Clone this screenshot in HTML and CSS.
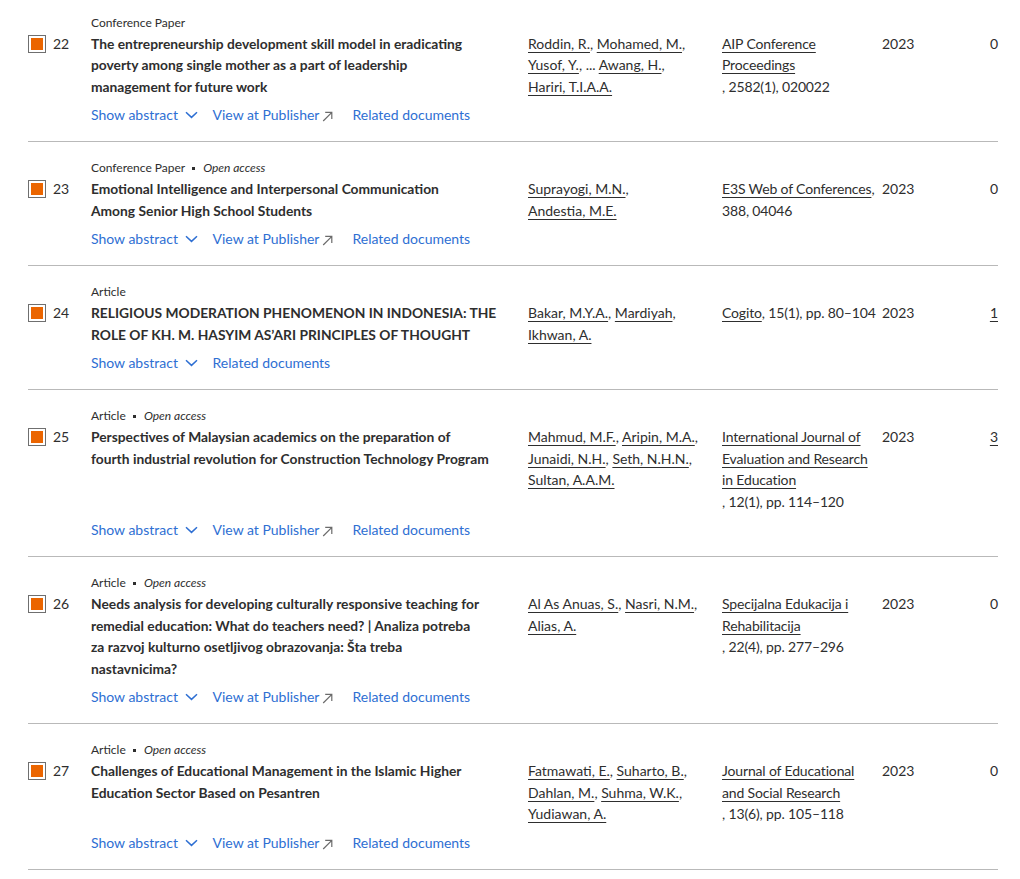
FILE: index.html
```html
<!DOCTYPE html>
<html>
<head>
  <meta charset="UTF-8" />
  <title>Documents</title>
  <link rel="stylesheet" href="styles.css">
</head>
<body>
  <div class="doc-list">

    <div class="doc">
      <div class="doc-type">Conference Paper</div>
      <span class="check"><span class="check-fill"></span></span>
      <span class="doc-num">22</span>
      <h3 class="doc-title">The entrepreneurship development skill model in eradicating<br>poverty among single mother as a part of leadership<br>management for future work</h3>
      <div class="doc-authors"><a href="#">Roddin, R.</a>, <a href="#">Mohamed, M.</a>, <a href="#">Yusof, Y.</a>, ... <a href="#">Awang, H.</a>, <a href="#">Hariri, T.I.A.A.</a></div>
      <div class="doc-source"><a href="#">AIP Conference Proceedings</a>&#8203;, <span class="vol">2582(1), 020022</span></div>
      <div class="doc-year">2023</div>
      <div class="doc-cites">0</div>
      <div class="doc-links">
        <a href="#" class="lnk">Show abstract <svg class="chev" width="13" height="8" viewBox="0 0 13 8"><path d="M1 1.2 L6.5 6.4 L12 1.2" /></svg></a>
        <a href="#" class="lnk">View at Publisher<svg class="ext" width="11" height="11" viewBox="0 0 11 11"><path d="M1.2 10 L9.6 1.6 M3.2 1.4 H9.8 V8" /></svg></a>
        <a href="#" class="lnk">Related documents</a>
      </div>
    </div>

    <div class="doc">
      <div class="doc-type">Conference Paper <span class="dot"></span> <em>Open access</em></div>
      <span class="check"><span class="check-fill"></span></span>
      <span class="doc-num">23</span>
      <h3 class="doc-title">Emotional Intelligence and Interpersonal Communication<br>Among Senior High School Students</h3>
      <div class="doc-authors"><a href="#">Suprayogi, M.N.</a>, <a href="#">Andestia, M.E.</a></div>
      <div class="doc-source"><a href="#">E3S Web of Conferences</a>&#8203;, <span class="vol">388, 04046</span></div>
      <div class="doc-year">2023</div>
      <div class="doc-cites">0</div>
      <div class="doc-links">
        <a href="#" class="lnk">Show abstract <svg class="chev" width="13" height="8" viewBox="0 0 13 8"><path d="M1 1.2 L6.5 6.4 L12 1.2" /></svg></a>
        <a href="#" class="lnk">View at Publisher<svg class="ext" width="11" height="11" viewBox="0 0 11 11"><path d="M1.2 10 L9.6 1.6 M3.2 1.4 H9.8 V8" /></svg></a>
        <a href="#" class="lnk">Related documents</a>
      </div>
    </div>

    <div class="doc">
      <div class="doc-type">Article</div>
      <span class="check"><span class="check-fill"></span></span>
      <span class="doc-num">24</span>
      <h3 class="doc-title">RELIGIOUS MODERATION PHENOMENON IN INDONESIA: THE<br>ROLE OF KH. M. HASYIM AS’ARI PRINCIPLES OF THOUGHT</h3>
      <div class="doc-authors"><a href="#">Bakar, M.Y.A.</a>, <a href="#">Mardiyah</a>, <a href="#">Ikhwan, A.</a></div>
      <div class="doc-source"><a href="#">Cogito</a>&#8203;, <span class="vol">15(1), pp. 80–104</span></div>
      <div class="doc-year">2023</div>
      <div class="doc-cites"><a href="#">1</a></div>
      <div class="doc-links">
        <a href="#" class="lnk">Show abstract <svg class="chev" width="13" height="8" viewBox="0 0 13 8"><path d="M1 1.2 L6.5 6.4 L12 1.2" /></svg></a>
        <a href="#" class="lnk">Related documents</a>
      </div>
    </div>

    <div class="doc">
      <div class="doc-type">Article <span class="dot"></span> <em>Open access</em></div>
      <span class="check"><span class="check-fill"></span></span>
      <span class="doc-num">25</span>
      <h3 class="doc-title">Perspectives of Malaysian academics on the preparation of<br>fourth industrial revolution for Construction Technology Program</h3>
      <div class="doc-authors"><a href="#">Mahmud, M.F.</a>, <a href="#">Aripin, M.A.</a>, <a href="#">Junaidi, N.H.</a>, <a href="#">Seth, N.H.N.</a>, <a href="#">Sultan, A.A.M.</a></div>
      <div class="doc-source"><a href="#">International Journal of Evaluation and Research in Education</a>&#8203;, <span class="vol">12(1), pp. 114–120</span></div>
      <div class="doc-year">2023</div>
      <div class="doc-cites"><a href="#">3</a></div>
      <div class="doc-links">
        <a href="#" class="lnk">Show abstract <svg class="chev" width="13" height="8" viewBox="0 0 13 8"><path d="M1 1.2 L6.5 6.4 L12 1.2" /></svg></a>
        <a href="#" class="lnk">View at Publisher<svg class="ext" width="11" height="11" viewBox="0 0 11 11"><path d="M1.2 10 L9.6 1.6 M3.2 1.4 H9.8 V8" /></svg></a>
        <a href="#" class="lnk">Related documents</a>
      </div>
    </div>

    <div class="doc">
      <div class="doc-type">Article <span class="dot"></span> <em>Open access</em></div>
      <span class="check"><span class="check-fill"></span></span>
      <span class="doc-num">26</span>
      <h3 class="doc-title">Needs analysis for developing culturally responsive teaching for<br>remedial education: What do teachers need? | Analiza potreba<br>za razvoj kulturno osetljivog obrazovanja: Šta treba<br>nastavnicima?</h3>
      <div class="doc-authors"><a href="#">Al As Anuas, S.</a>, <a href="#">Nasri, N.M.</a>, <a href="#">Alias, A.</a></div>
      <div class="doc-source"><a href="#">Specijalna Edukacija i Rehabilitacija</a>&#8203;, <span class="vol">22(4), pp. 277–296</span></div>
      <div class="doc-year">2023</div>
      <div class="doc-cites">0</div>
      <div class="doc-links">
        <a href="#" class="lnk">Show abstract <svg class="chev" width="13" height="8" viewBox="0 0 13 8"><path d="M1 1.2 L6.5 6.4 L12 1.2" /></svg></a>
        <a href="#" class="lnk">View at Publisher<svg class="ext" width="11" height="11" viewBox="0 0 11 11"><path d="M1.2 10 L9.6 1.6 M3.2 1.4 H9.8 V8" /></svg></a>
        <a href="#" class="lnk">Related documents</a>
      </div>
    </div>

    <div class="doc">
      <div class="doc-type">Article <span class="dot"></span> <em>Open access</em></div>
      <span class="check"><span class="check-fill"></span></span>
      <span class="doc-num">27</span>
      <h3 class="doc-title">Challenges of Educational Management in the Islamic Higher<br>Education Sector Based on Pesantren</h3>
      <div class="doc-authors"><a href="#">Fatmawati, E.</a>, <a href="#">Suharto, B.</a>, <a href="#">Dahlan, M.</a>, <a href="#">Suhma, W.K.</a>, <a href="#">Yudiawan, A.</a></div>
      <div class="doc-source"><a href="#">Journal of Educational and Social Research</a>&#8203;, <span class="vol">13(6), pp. 105–118</span></div>
      <div class="doc-year">2023</div>
      <div class="doc-cites">0</div>
      <div class="doc-links">
        <a href="#" class="lnk">Show abstract <svg class="chev" width="13" height="8" viewBox="0 0 13 8"><path d="M1 1.2 L6.5 6.4 L12 1.2" /></svg></a>
        <a href="#" class="lnk">View at Publisher<svg class="ext" width="11" height="11" viewBox="0 0 11 11"><path d="M1.2 10 L9.6 1.6 M3.2 1.4 H9.8 V8" /></svg></a>
        <a href="#" class="lnk">Related documents</a>
      </div>
    </div>

  </div>
</body>
</html>
```

FILE: styles.css
```css
body {
  margin: 0;
  background: #fff;
  color: #2e2e2e;
  font-family: Lato, "Open Sans", sans-serif;
  font-size: 14px;
  line-height: 21.5px;
}

.doc-list {
  margin: -3.5px 22px 0 28px;
}

.doc {
  display: grid;
  grid-template-columns: 25px 38px 437px 194px 160px 1fr auto;
  grid-template-areas:
    ".     .   type  .       .      .    .    "
    "check num title authors source year cites"
    ".     .   links links   .      .    .    ";
  padding: 17px 0 15px;
  border-bottom: 1px solid #b9b9b9;
}

.doc-type {
  grid-area: type;
  font-size: 12px;
  line-height: 18px;
  margin-bottom: 1px;
}
.doc-type em {
  font-style: italic;
}
.doc-type .dot {
  display: inline-block;
  width: 3px;
  height: 3px;
  margin: 0 5px 0 4px;
  background: #2e2e2e;
  vertical-align: middle;
}

.check {
  grid-area: check;
  box-sizing: border-box;
  width: 18px;
  height: 18px;
  margin-top: 2px;
  padding: 2px;
  border: 1px solid #6f6f6f;
  background: #fff;
}
.check-fill {
  display: block;
  width: 12px;
  height: 12px;
  background: #eb6500;
}

.doc-num {
  grid-area: num;
}

.doc-title {
  grid-area: title;
  margin: 0;
  padding-right: 12px;
  font-size: 13.8px;
  font-weight: bold;
  line-height: 21.5px;
}

.doc-authors {
  grid-area: authors;
  padding-right: 12px;
}
.doc-authors a {
  white-space: nowrap;
}
.doc-source {
  grid-area: source;
  padding-right: 6px;
  letter-spacing: -0.15px;
}
.doc-source > a {
  display: inline-block;
}
.doc-source .vol {
  white-space: nowrap;
}
.doc-year {
  grid-area: year;
}
.doc-cites {
  grid-area: cites;
  text-align: right;
}

.doc-authors a,
.doc-source a,
.doc-cites a {
  color: #2e2e2e;
  text-decoration: underline;
  text-underline-offset: 3px;
}

.doc-links {
  grid-area: links;
  display: flex;
  gap: 15px;
  margin-top: 7px;
  line-height: 22px;
}
.lnk {
  color: #2e6fd3;
  text-decoration: none;
  white-space: nowrap;
}
.lnk .chev {
  margin-left: 3px;
  fill: none;
  stroke: #2e6fd3;
  stroke-width: 1.5;
  vertical-align: 1px;
}
.lnk .ext {
  margin: 0 4px 0 3px;
  fill: none;
  stroke: #6b6b6b;
  stroke-width: 1.2;
  vertical-align: -2px;
}
```
